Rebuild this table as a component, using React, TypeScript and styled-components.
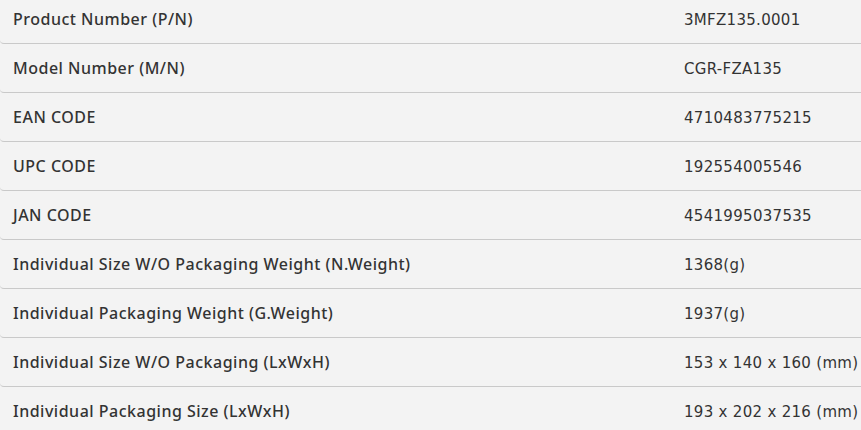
import styled, { createGlobalStyle } from 'styled-components'

const GlobalStyle = createGlobalStyle`
  html, body {
    margin: 0;
    background: #f3f3f3;
    overflow: hidden;
  }
`

const Table = styled.div`
  width: 861px;
  margin-top: -5px;
  background: #f3f3f3;
`

const Row = styled.div`
  display: grid;
  grid-template-columns: 684px 1fr;
  align-items: center;
  height: 48px;
  border-bottom: 1px solid #c9c9c9;
  border-radius: 0 0 0 4px;
`

const Label = styled.div`
  padding-left: 13px;
  font-family: 'Noto Sans', 'Open Sans', sans-serif;
  font-size: 16px;
  font-weight: 500;
  letter-spacing: 0.5px;
  line-height: 20px;
  color: #333;
  white-space: nowrap;
`

const Value = styled.div`
  font-family: 'DejaVu Sans', Verdana, sans-serif;
  font-size: 15px;
  letter-spacing: 0.3px;
  line-height: 20px;
  padding-top: 2px;
  color: #333;
  white-space: nowrap;
`

const specs: [string, string][] = [
  ['Product Number (P/N)', '3MFZ135.0001'],
  ['Model Number (M/N)', 'CGR-FZA135'],
  ['EAN CODE', '4710483775215'],
  ['UPC CODE', '192554005546'],
  ['JAN CODE', '4541995037535'],
  ['Individual Size W/O Packaging Weight (N.Weight)', '1368(g)'],
  ['Individual Packaging Weight (G.Weight)', '1937(g)'],
  ['Individual Size W/O Packaging (LxWxH)', '153 x 140 x 160 (mm)'],
  ['Individual Packaging Size (LxWxH)', '193 x 202 x 216 (mm)'],
]

const App = () => {
  return (
    <>
      <GlobalStyle />
      <Table>
        {specs.map(([label, value]) => (
          <Row key={label}>
            <Label>{label}</Label>
            <Value>{value}</Value>
          </Row>
        ))}
      </Table>
    </>
  )
}

export default App
